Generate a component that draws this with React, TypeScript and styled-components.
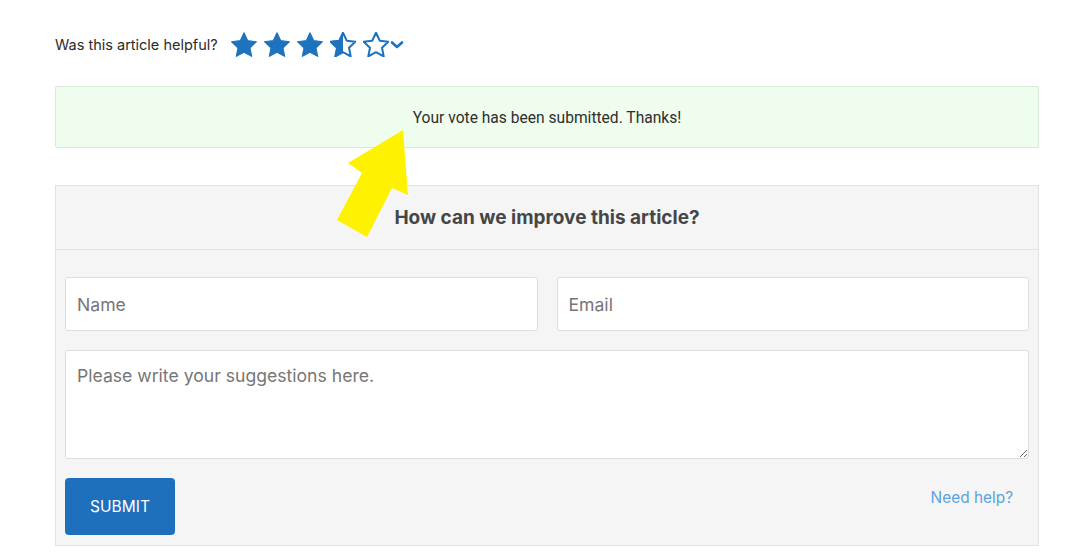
import React from "react";
import styled, { createGlobalStyle } from "styled-components";

const Global = createGlobalStyle`
  html, body { margin: 0; padding: 0; background: #ffffff; }
  body { font-family: Inter, "Noto Sans", Arial, sans-serif; color: #333; }
  * { box-sizing: border-box; }
`;

const Page = styled.div`
  position: relative;
  width: 1084px;
  height: 560px;
  overflow: hidden;
  padding: 28px 45px 0 55px;
`;

const RatingRow = styled.div`
  display: flex;
  align-items: center;
  height: 32px;
`;

const Question = styled.span`
  font-size: 14.5px;
  color: #2b2b2b;
  margin-right: 13px;
`;

const Stars = styled.div`
  display: flex;
  align-items: center;
  gap: 7px;
`;

const Chevron = styled.svg`
  margin-left: -6px;
  margin-top: 2px;
`;

const Notice = styled.div`
  margin-top: 26px;
  height: 62px;
  background: #effdee;
  border: 1px solid #d6ead5;
  border-radius: 2px;
  display: flex;
  align-items: center;
  justify-content: center;
  font-family: Roboto, "Noto Sans", Arial, sans-serif;
  font-size: 15.6px;
  color: #2e2e2e;
  padding-top: 1px;
`;

const Panel = styled.div`
  margin-top: 37px;
  background: #f5f5f5;
  border: 1px solid #e2e2e2;
`;

const PanelHeader = styled.div`
  height: 64px;
  display: flex;
  align-items: center;
  justify-content: center;
  border-bottom: 1px solid #e2e2e2;
  font-size: 19px;
  font-weight: 700;
  color: #464646;
`;

const Form = styled.div`
  padding: 27px 9px 10px 9px;
  display: flex;
  flex-direction: column;
  gap: 19px;
`;

const FieldRow = styled.div`
  display: grid;
  grid-template-columns: 1fr 1fr;
  gap: 19px;
`;

const Input = styled.input`
  height: 54px;
  width: 100%;
  border: 1px solid #dedede;
  border-radius: 3px;
  background: #fff;
  padding: 0 11px;
  font-family: Inter, "Noto Sans", Arial, sans-serif;
  font-size: 17.6px;
  color: #333;
  outline: none;
  &::placeholder { color: #767676; }
`;

const TextArea = styled.textarea`
  height: 109px;
  width: 100%;
  border: 1px solid #dedede;
  border-radius: 3px;
  background: #fff;
  padding: 14px 11px;
  font-family: Inter, "Noto Sans", Arial, sans-serif;
  font-size: 17.6px;
  color: #333;
  outline: none;
  resize: vertical;
  display: block;
  &::placeholder { color: #767676; }
`;

const Actions = styled.div`
  display: flex;
  align-items: center;
  justify-content: space-between;
  padding-right: 16px;
`;

const Submit = styled.button`
  width: 110px;
  height: 57px;
  background: #1e70bd;
  border: none;
  border-radius: 4px;
  color: #fff;
  font-family: Inter, "Noto Sans", Arial, sans-serif;
  font-size: 15.5px;
  cursor: pointer;
`;

const Help = styled.a`
  color: #5aa3dd;
  font-size: 15.4px;
  text-decoration: none;
  margin-top: -18px;
`;

const Arrow = styled.svg`
  position: absolute;
  left: 0;
  top: 0;
  pointer-events: none;
`;

const STAR =
  "M12 1.6l3.1 6.6 7.2 0.9-5.3 5 1.4 7.2L12 17.8l-6.4 3.5 1.4-7.2-5.3-5 7.2-0.9z";

const Star: React.FC<{ kind: "full" | "half" | "empty" }> = ({ kind }) => (
  <svg width="26" height="25" viewBox="1.2 1 21.6 20.8">
    <defs>
      <clipPath id="halfclip">
        <rect x="0" y="0" width="12" height="24" />
      </clipPath>
    </defs>
    {kind === "full" && <path d={STAR} fill="#1e73be" stroke="#1e73be" strokeWidth="0.9" strokeLinejoin="round" />}
    {kind === "half" && (
      <>
        <path d={STAR} fill="none" stroke="#1e73be" strokeWidth="1.7" strokeLinejoin="round" />
        <path d={STAR} fill="#1e73be" stroke="#1e73be" strokeWidth="0.9" clipPath="url(#halfclip)" />
      </>
    )}
    {kind === "empty" && <path d={STAR} fill="none" stroke="#1e73be" strokeWidth="1.7" strokeLinejoin="round" />}
  </svg>
);

export default function App() {
  return (
    <>
      <Global />
      <Page>
        <RatingRow>
          <Question>Was this article helpful?</Question>
          <Stars>
            <Star kind="full" />
            <Star kind="full" />
            <Star kind="full" />
            <Star kind="half" />
            <Star kind="empty" />
            <Chevron width="14" height="10" viewBox="0 0 14 10">
              <path d="M2 2.5l5 4.5 5-4.5" fill="none" stroke="#1e73be" strokeWidth="2.6" strokeLinecap="round" strokeLinejoin="round" />
            </Chevron>
          </Stars>
        </RatingRow>
        <Notice>Your vote has been submitted. Thanks!</Notice>
        <Panel>
          <PanelHeader>How can we improve this article?</PanelHeader>
          <Form>
            <FieldRow>
              <Input placeholder="Name" />
              <Input placeholder="Email" />
            </FieldRow>
            <TextArea placeholder="Please write your suggestions here." />
            <Actions>
              <Submit>SUBMIT</Submit>
              <Help href="#">Need help?</Help>
            </Actions>
          </Form>
        </Panel>
        <Arrow width="1084" height="560" viewBox="0 0 1084 560">
          <polygon
            points="403,130 408,195 392,188 367,237 337,220 362,173 348,163"
            fill="#fff200"
          />
        </Arrow>
      </Page>
    </>
  );
}
